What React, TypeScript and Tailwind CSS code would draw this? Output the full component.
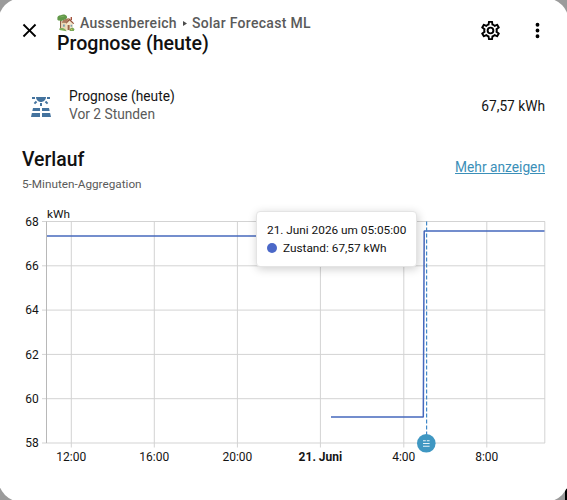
import type { ReactNode } from "react";

const font = "font-['Roboto','Noto_Sans',sans-serif]";

const icons = {
  close:
    "M19,6.41L17.59,5L12,10.59L6.41,5L5,6.41L10.59,12L5,17.59L6.41,19L12,13.41L17.59,19L19,17.59L13.41,12L19,6.41Z",
  cog: "M12,8A4,4 0 0,1 16,12A4,4 0 0,1 12,16A4,4 0 0,1 8,12A4,4 0 0,1 12,8M12,10A2,2 0 0,0 10,12A2,2 0 0,0 12,14A2,2 0 0,0 14,12A2,2 0 0,0 12,10M10,22C9.75,22 9.54,21.82 9.5,21.58L9.13,18.93C8.5,18.68 7.96,18.34 7.44,17.94L4.95,18.95C4.73,19.03 4.46,18.95 4.34,18.73L2.34,15.27C2.21,15.05 2.27,14.78 2.46,14.63L4.57,12.97L4.5,12L4.57,11L2.46,9.37C2.27,9.22 2.21,8.95 2.34,8.73L4.34,5.27C4.46,5.05 4.73,4.96 4.95,5.05L7.44,6.05C7.96,5.66 8.5,5.32 9.13,5.07L9.5,2.42C9.54,2.18 9.75,2 10,2H14C14.25,2 14.46,2.18 14.5,2.42L14.87,5.07C15.5,5.32 16.04,5.66 16.56,6.05L19.05,5.05C19.27,4.96 19.54,5.05 19.66,5.27L21.66,8.73C21.79,8.95 21.73,9.22 21.54,9.37L19.43,11L19.5,12L19.43,13L21.54,14.63C21.73,14.78 21.79,15.05 21.66,15.27L19.66,18.73C19.54,18.95 19.27,19.04 19.05,18.95L16.56,17.95C16.04,18.34 15.5,18.68 14.87,18.93L14.5,21.58C14.46,21.82 14.25,22 14,22H10M11.25,4L10.88,6.61C9.68,6.86 8.62,7.5 7.85,8.39L5.44,7.35L4.69,8.65L6.8,10.2C6.4,11.37 6.4,12.64 6.8,13.8L4.68,15.36L5.43,16.66L7.86,15.62C8.63,16.5 9.68,17.14 10.87,17.38L11.24,20H12.76L13.13,17.39C14.32,17.14 15.37,16.5 16.14,15.62L18.57,16.66L19.32,15.36L17.2,13.81C17.6,12.64 17.6,11.37 17.2,10.2L19.31,8.65L18.56,7.35L16.15,8.39C15.38,7.5 14.32,6.86 13.12,6.62L12.75,4H11.25Z",
  dots: "M12,16A2,2 0 0,1 14,18A2,2 0 0,1 12,20A2,2 0 0,1 10,18A2,2 0 0,1 12,16M12,10A2,2 0 0,1 14,12A2,2 0 0,1 12,14A2,2 0 0,1 10,12A2,2 0 0,1 12,10M12,4A2,2 0 0,1 14,6A2,2 0 0,1 12,8A2,2 0 0,1 10,6A2,2 0 0,1 12,4Z",
  solar:
    "M3.33 16H11V13H4L3.33 16M13 16H20.67L20 13H13V16M21.11 18H13V22H22L21.11 18M2 22H11V18H2.89L2 22M11 8H13V11H11V8M15.76 7.21L17.18 5.79L19.3 7.91L17.89 9.33L15.76 7.21M4.71 7.91L6.83 5.79L8.24 7.21L6.12 9.33L4.71 7.91M3 2H6V4H3V2M18 2H21V4H18V2M12 7C14.76 7 17 4.76 17 2H7C7 4.76 9.24 7 12 7Z",
};

function Icon({ path, className }: { path: string; className: string }) {
  return (
    <svg viewBox="0 0 24 24" className={`shrink-0 ${className}`} fill="currentColor">
      <path d={path} />
    </svg>
  );
}

function IconButton({ label, children }: { label: string; children: ReactNode }) {
  return (
    <button aria-label={label} className="flex size-[47px] items-center justify-center text-black">
      {children}
    </button>
  );
}

// house with garden, drawn in front of the area name
function HouseIcon() {
  return (
    <svg viewBox="0 0 18 18" className="size-[18px] shrink-0">
      <rect x="3" y="6" width="1.5" height="8.6" fill="#8a6244" />
      <path d="M4.5 8 10.6 4 16 8.6V15.8L9.5 16.4 4.5 15Z" fill="#f3e6cb" />
      <path d="M4.5 8 7 6.5 9.5 9V16.4L4.5 15Z" fill="#ead8b6" />
      <path d="M9 8.6 12.6 4.6 17.2 9.4 16.3 9.9 12.5 6.4 9.3 9.8Z" fill="#94513a" />
      <path d="M6.5 5.4 12.6 4 9.2 9 4.6 8.8Z" fill="#ad7a5e" />
      <rect x="13.6" y="3" width="1.4" height="3" fill="#a4513b" />
      <rect x="10.6" y="11" width="2" height="5" fill="#9c6449" />
      <rect x="13.6" y="10.8" width="1.6" height="1.9" fill="#7b9fae" />
      <rect x="6" y="10.5" width="1.8" height="2.2" fill="#7b9fae" />
      <path d="M.4 4.4C0 2.6 1.8 1 3.8 1.2 5.6 .2 9 .4 9.8 2.2 10.8 3.8 9 5.4 7.2 5.6 6 7.2 3.4 7.4 2.4 6.6 .8 6.6 0 5.6 .4 4.4Z" fill="#62994a" />
      <path d="M2.4 3.6C3.6 1.8 6.4 1.4 7.8 2.8 6 2.9 4.4 3.4 2.4 3.6Z" fill="#7eb05f" />
      <path d="M2.4 14.4C4 13.4 6.8 14 8.2 15.2L9.6 17.2 2.4 16Z" fill="#7fae5b" />
      <path d="M12.8 15C14.2 13.2 17 13.4 17.4 15.4L16.8 17 12.6 17Z" fill="#79a957" />
      <circle cx="14.6" cy="15.4" r=".6" fill="#ddc34d" />
    </svg>
  );
}

const yTicks = [
  { label: "68", y: 221.5 },
  { label: "66", y: 265.8 },
  { label: "64", y: 310.1 },
  { label: "62", y: 354.4 },
  { label: "60", y: 398.7 },
  { label: "58", y: 443 },
];

const xTicks = [
  { label: "12:00", x: 71.3 },
  { label: "16:00", x: 154.3 },
  { label: "20:00", x: 237.4 },
  { label: "21. Juni", x: 320.4, bold: true },
  { label: "4:00", x: 403.8 },
  { label: "8:00", x: 486.8 },
];

function HistoryChart() {
  return (
    <svg
      viewBox="0 200 567 270"
      className="block h-[270px] w-[567px] text-[12px]"
      fill="none"
    >
      <g stroke="#d3d3d3" strokeWidth="1">
        {yTicks.map((t) => (
          <path key={t.label} d={`M42 ${t.y}H545`} />
        ))}
        {xTicks.map((t) => (
          <path key={t.label} d={`M${t.x} 221.5V447.5`} />
        ))}
        <path d="M544.8 221.5V443" />
      </g>
      <path d="M46.5 221.5V443" stroke="#b8b8b8" />

      <g fill="#141414">
        <text x="47" y="217.5" className="text-[11.8px]">
          kWh
        </text>
        {yTicks.map((t) => (
          <text key={t.label} x="38.8" y={t.y + 4.3} textAnchor="end">
            {t.label}
          </text>
        ))}
        {xTicks.map((t) => (
          <text
            key={t.label}
            x={t.x}
            y="461"
            textAnchor="middle"
            fontWeight={t.bold ? 700 : 400}
          >
            {t.label}
          </text>
        ))}
      </g>

      <g stroke="#4668bd" strokeWidth="1.5" strokeLinejoin="bevel">
        <path d="M47 235.9H330" />
        <path d="M331 417H423.3L424.2 231H544.5" />
      </g>
      <path d="M426.6 221.5V435" stroke="#4088c8" strokeWidth="1.2" strokeDasharray="4 2" />

      <circle cx="426.3" cy="443.3" r="9.3" fill="#3f97c2" />
      <g stroke="#e6f3f9" strokeWidth="1.1">
        <path d="M423 440.7H425.8M426.8 440.7H429.6" />
        <path d="M423 443.5H429.6M423 446.2H429.6" />
      </g>
    </svg>
  );
}

function Tooltip() {
  return (
    <div className="absolute left-[256px] top-[11px] h-[56px] w-[161px] rounded-[4px] border border-[#e4e4e4] bg-white pl-[10px] pt-[10px] text-[11.8px] leading-[17.5px] text-[#111] shadow-[1px_2px_10px_rgba(0,0,0,0.2)]">
      <p className="whitespace-nowrap">21. Juni 2026 um 05:05:00</p>
      <p className="flex items-center whitespace-nowrap">
        <span className="mr-[6px] size-[10px] rounded-full bg-[#4b68c8]" />
        Zustand: 67,57 kWh
      </p>
    </div>
  );
}

export default function App() {
  return (
    <div className={`relative h-[500px] w-[567px] overflow-hidden bg-[#9b9b9b] ${font}`}>
      {/* edge of the page behind the dialog */}
      <div className="absolute bottom-0 right-0 h-[11px] w-[2px] bg-black" />
      <main className="relative -m-[2px] h-[504px] rounded-[24px] bg-white p-[2px]">
        <header className="flex h-[75px] items-start pl-[6px] pr-[6px] pt-[7px]">
          <IconButton label="Schließen">
            <Icon path={icons.close} className="size-[23px]" />
          </IconButton>
          <div className="ml-[4px] flex-1 pt-[6px]">
            <p className="flex h-[20px] items-center text-[14px] font-medium leading-[20px] tracking-[0.3px] text-[#5a5a5a]">
              <HouseIcon />
              <span className="ml-[5px]">Aussenbereich</span>
              <svg viewBox="0 0 5 6" className="ml-[6px] mr-[5px] h-[5px] w-[4px]">
                <path d="M0 0 5 3 0 6Z" fill="#4c4c4c" />
              </svg>
              <span>Solar Forecast ML</span>
            </p>
            <h1 className="text-[19.6px] font-medium leading-[22px] text-[#111]">Prognose (heute)</h1>
          </div>
          <IconButton label="Einstellungen">
            <Icon path={icons.cog} className="size-[23px]" />
          </IconButton>
          <IconButton label="Menü">
            <Icon path={icons.dots} className="size-[23px]" />
          </IconButton>
        </header>

        <section className="flex h-[63px] items-center px-[22px]">
          <Icon path={icons.solar} className="ml-[7px] size-[24px] text-[#44739e]" />
          <div className="ml-[16px] flex-1 pb-[3px] text-[13.75px] leading-[18px]">
            <p className="text-[#141414]">Prognose (heute)</p>
            <p className="text-[#5a5a5a]">Vor 2 Stunden</p>
          </div>
          <span className="text-[13.75px] text-[#141414]">67,57 kWh</span>
        </section>

        <section className="flex h-[62px] items-start justify-between px-[22px] pt-[9px]">
          <div>
            <h2 className="text-[19.4px] font-medium leading-[26px] text-[#111]">Verlauf</h2>
            <p className="mt-[3px] text-[11.75px] leading-[16px] text-[#5a5a5a]">
              5-Minuten-Aggregation
            </p>
          </div>
          <a href="#" className="mt-[10px] text-[13.75px] leading-[20px] text-[#3b8fb8] underline">
            Mehr anzeigen
          </a>
        </section>

        <div className="relative">
          <HistoryChart />
          <Tooltip />
        </div>
      </main>
    </div>
  );
}
